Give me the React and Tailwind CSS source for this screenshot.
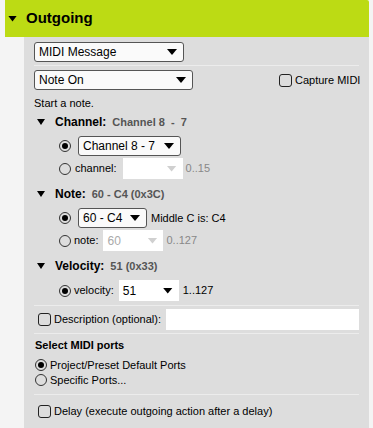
import React from "react";

const font = { fontFamily: '"Liberation Sans", Arial, sans-serif' };

function Tri({ color = "bg-black", size = "w-[10px] h-[6px]" }) {
    return <span className={`inline-block shrink-0 ${size} ${color} [clip-path:polygon(0_0,100%_0,50%_100%)]`} />;
}

function Select({ value, width, bordered = true, disabled = false }) {
    return (
        <div
            className={`flex items-center justify-between pl-[4px] pr-[6px] text-[12px] ${bordered ? "h-[20px] border border-[#555] rounded-[3px] bg-[#fafafa]" : "bg-white h-[21px]"} ${disabled ? "text-[#aaa]" : "text-black"}`}
            style={{ width }}
        >
            <span className="whitespace-pre">{value}</span>
            <Tri color={disabled ? "bg-[#d0d0d0]" : "bg-black"} />
        </div>
    );
}

function Radio({ checked }) {
    return (
        <span className="w-[12px] h-[12px] rounded-full border border-[#333] flex items-center justify-center shrink-0">
            {checked && <span className="w-[6px] h-[6px] rounded-full bg-black" />}
        </span>
    );
}

function Check() {
    return <span className="w-[13px] h-[13px] rounded-[3px] border border-[#222] shrink-0" />;
}

function Sep() {
    return <div className="h-px w-[325px] bg-[#ececec]" />;
}

function Heading({ label, value }) {
    return (
        <div className="flex items-center h-[16px] pl-[3px]">
            <Tri size="w-[8px] h-[6px]" />
            <span className="ml-[10px] text-[12px] font-bold">{label}</span>
            <span className="ml-[6px] text-[11px] font-bold text-[#555] whitespace-pre">{value}</span>
        </div>
    );
}

export default function App() {
    return (
        <div className="w-[373px] h-[428px] bg-[#f4f4f4] pl-[5px] pr-[4px] flex flex-col overflow-hidden" style={font}>
            <div className="h-[37px] bg-[#bcdb14] flex items-center pl-[3px] rounded-tr-[2px]">
                <Tri size="w-[9px] h-[6px]" />
                <span className="ml-[9px] text-[15px] font-bold text-black">Outgoing</span>
            </div>
            <div className="flex-1 ml-[19px] bg-[#dddddd] pl-[10px] flex flex-col text-[11px] text-black">
                <div className="mt-[5px]">
                    <Select value="MIDI Message" width="150px" />
                </div>
                <div className="mt-[3px]"><Sep /></div>
                <div className="mt-[4px] flex items-center">
                    <Select value="Note On" width="159px" />
                    <div className="ml-[86px] flex items-center gap-[3px]">
                        <Check />
                        <span>Capture MIDI</span>
                    </div>
                </div>
                <div className="mt-[6px] h-[14px] flex items-center">Start a note.</div>

                <div className="mt-[4px]">
                    <Heading label="Channel:" value="Channel 8  -  7" />
                </div>
                <div className="mt-[6px] flex items-center pl-[25px]">
                    <Radio checked />
                    <div className="ml-[7px]">
                        <Select value="Channel 8 - 7" width="103px" />
                    </div>
                </div>
                <div className="mt-[2px] h-[21px] flex items-center pl-[25px]">
                    <Radio />
                    <span className="ml-[4px]">channel:</span>
                    <div className="ml-[6px]">
                        <Select value="" width="60px" bordered={false} disabled />
                    </div>
                    <span className="ml-[3px] text-[#888]">0..15</span>
                </div>

                <div className="mt-[7px]">
                    <Heading label="Note:" value="60 - C4 (0x3C)" />
                </div>
                <div className="mt-[6px] flex items-center pl-[25px]">
                    <Radio checked />
                    <div className="ml-[7px]">
                        <Select value="60 - C4" width="69px" />
                    </div>
                    <span className="ml-[4px]">Middle C is: C4</span>
                </div>
                <div className="mt-[2px] h-[21px] flex items-center pl-[25px]">
                    <Radio />
                    <span className="ml-[3px]">note:</span>
                    <div className="ml-[5px]">
                        <Select value="60" width="60px" bordered={false} disabled />
                    </div>
                    <span className="ml-[3px] text-[#888]">0..127</span>
                </div>

                <div className="mt-[7px]">
                    <Heading label="Velocity:" value="51 (0x33)" />
                </div>
                <div className="mt-[6px] h-[21px] flex items-center pl-[25px]">
                    <Radio checked />
                    <span className="ml-[3px]">velocity:</span>
                    <div className="ml-[5px]">
                        <Select value="51" width="60px" bordered={false} />
                    </div>
                    <span className="ml-[4px]">1..127</span>
                </div>

                <div className="mt-[4px]"><Sep /></div>
                <div className="mt-[3px] flex items-center pl-[4px]">
                    <Check />
                    <span className="ml-[3px]">Description (optional):</span>
                    <div className="ml-auto mr-[10px] w-[193px] h-[21px] bg-white" />
                </div>
                <div className="mt-[3px]"><Sep /></div>

                <div className="mt-[4px] h-[14px] flex items-center pl-[1px] font-bold">Select MIDI ports</div>
                <div className="mt-[6px] h-[14px] flex items-center pl-[1px]">
                    <Radio checked />
                    <span className="ml-[3px]">Project/Preset Default Ports</span>
                </div>
                <div className="mt-[1px] h-[14px] flex items-center pl-[1px]">
                    <Radio />
                    <span className="ml-[3px]">Specific Ports...</span>
                </div>
                <div className="mt-[7px]"><Sep /></div>
                <div className="mt-[8px] h-[16px] flex items-center pl-[4px]">
                    <Check />
                    <span className="ml-[3px]">Delay (execute outgoing action after a delay)</span>
                </div>
            </div>
        </div>
    );
}
